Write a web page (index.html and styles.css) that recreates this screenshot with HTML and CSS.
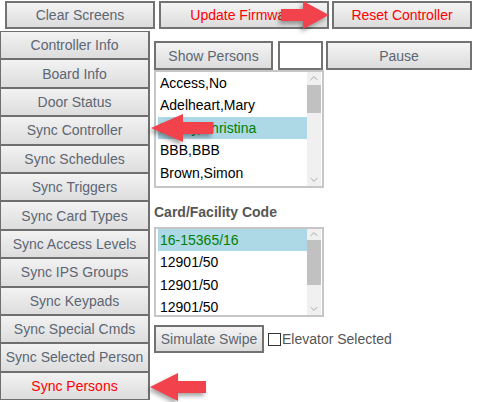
FILE: index.html
```html
<!DOCTYPE html>
<html>
<head>
<meta charset="utf-8">
<link rel="stylesheet" href="styles.css">
</head>
<body>
<div class="page">
  <div class="topbar">
    <button class="btn w-clear">Clear Screens</button>
    <button class="btn red w-update">Update Firmware</button>
    <button class="btn red w-reset">Reset Controller</button>
  </div>
  <div class="main">
    <div class="sidebar">
      <button class="side">Controller Info</button>
      <button class="side">Board Info</button>
      <button class="side">Door Status</button>
      <button class="side">Sync Controller</button>
      <button class="side">Sync Schedules</button>
      <button class="side">Sync Triggers</button>
      <button class="side">Sync Card Types</button>
      <button class="side">Sync Access Levels</button>
      <button class="side">Sync IPS Groups</button>
      <button class="side">Sync Keypads</button>
      <button class="side">Sync Special Cmds</button>
      <button class="side">Sync Selected Person</button>
      <button class="side red">Sync Persons</button>
    </div>
    <div class="panel">
      <div class="row">
        <button class="btn w-show">Show Persons</button>
        <div class="box"></div>
        <button class="btn w-pause">Pause</button>
      </div>
      <div class="list list1">
        <div class="items">
          <div class="item">Access,No</div>
          <div class="item">Adelheart,Mary</div>
          <div class="item sel">Bailey,Christina</div>
          <div class="item">BBB,BBB</div>
          <div class="item">Brown,Simon</div>
        </div>
        <div class="sbar">
          <svg class="chev" width="15" height="13" viewBox="0 0 15 13"><polyline points="4,8 7.5,4.5 11,8" fill="none" stroke="#a3a3a3" stroke-width="1"/></svg>
          <div class="thumb thumb1"></div>
          <div class="spacer"></div>
          <svg class="chev" width="15" height="13" viewBox="0 0 15 13"><polyline points="4,5 7.5,8.5 11,5" fill="none" stroke="#a3a3a3" stroke-width="1"/></svg>
        </div>
      </div>
      <div class="label">Card/Facility Code</div>
      <div class="list list2">
        <div class="items">
          <div class="item sel">16-15365/16</div>
          <div class="item">12901/50</div>
          <div class="item">12901/50</div>
          <div class="item">12901/50</div>
        </div>
        <div class="sbar">
          <svg class="chev" width="15" height="11" viewBox="0 0 15 11"><polyline points="4,7 7.5,3.5 11,7" fill="none" stroke="#a3a3a3" stroke-width="1"/></svg>
          <div class="thumb thumb2"></div>
          <div class="spacer"></div>
          <svg class="chev" width="15" height="13" viewBox="0 0 15 13"><polyline points="4,5 7.5,8.5 11,5" fill="none" stroke="#a3a3a3" stroke-width="1"/></svg>
        </div>
      </div>
      <div class="swipe-row">
        <button class="btn w-swipe">Simulate Swipe</button>
        <label class="chk"><span class="cbox"></span>Elevator Selected</label>
      </div>
    </div>
  </div>

  <svg class="arrow arrow-top" width="64" height="40" viewBox="0 0 64 40">
    <polygon points="4,10 26,10 26,2 52,16 26,30 26,22 4,22" fill="#f2424b"/>
  </svg>
  <svg class="arrow arrow-mid" width="72" height="40" viewBox="0 0 72 40">
    <polygon points="66,10 36,10 36,2 4,16 36,30 36,22 66,22" fill="#f2424b"/>
  </svg>
  <svg class="arrow arrow-bot" width="68" height="40" viewBox="0 0 68 40">
    <polygon points="60,10 32,10 32,2 4,16 32,30 32,22 60,22" fill="#f2424b"/>
  </svg>
</div>
</body>
</html>
```
FILE: styles.css
```css
* { box-sizing: border-box; }
html, body {
  margin: 0;
  padding: 0;
  background: #ffffff;
}
body {
  font-family: "Liberation Sans", Arial, sans-serif;
  font-size: 14px;
  width: 478px;
  height: 402px;
  overflow: hidden;
}
.page {
  position: relative;
  width: 478px;
  height: 402px;
}
button {
  font-family: "Liberation Sans", Arial, sans-serif;
  font-size: 14px;
  margin: 0;
  padding: 0;
  cursor: default;
}
.btn {
  height: 28px;
  border: 2px solid #727272;
  background: linear-gradient(#f4f4f4, #dcdcdc);
  color: #5d6673;
  text-align: center;
}
.red { color: #ff0000 !important; }

.topbar {
  display: flex;
  padding: 1px 0 0 5px;
}
.w-clear { width: 150px; margin-right: 4px; }
.w-update { width: 170px; margin-right: 3px; }
.w-reset { width: 140px; }

.main {
  display: flex;
  margin-top: 2px;
}
.sidebar {
  width: 150px;
  display: flex;
  flex-direction: column;
}
.side {
  height: 28.4px;
  border: 1px solid #6f6f6f;
  border-right-width: 2px;
  background: linear-gradient(#f2f2f2, #dddddd);
  color: #5d6673;
  text-align: center;
  white-space: nowrap;
}

.panel {
  margin-left: 4px;
  margin-top: 10px;
  width: 318px;
}
.row {
  display: flex;
  align-items: stretch;
}
.w-show { width: 119px; height: 29px; margin-right: 5px; }
.box {
  width: 45px;
  height: 29px;
  border: 2px solid #727272;
  background: #fff;
  margin-right: 3px;
}
.w-pause { width: 146px; height: 29px; }

.list {
  width: 170px;
  border: 2px solid #c6c6c6;
  display: flex;
  overflow: hidden;
  background: #fff;
}
.list1 { height: 118px; }
.list2 { height: 90px; margin-top: 7px; }
.items {
  flex: 1;
  padding-left: 2px;
  overflow: hidden;
}
.item {
  height: 22.4px;
  line-height: 22.4px;
  padding-left: 2px;
  color: #000;
  white-space: nowrap;
}
.item.sel {
  background: #add8e6;
  color: #008000;
}
.sbar {
  width: 14px;
  background: #f0f0f0;
  display: flex;
  flex-direction: column;
  margin-right: 1px;
}
.chev { display: block; width: 14px; flex: none; }
.thumb { background: #c1c1c1; flex: none; }
.thumb1 { height: 28px; }
.thumb2 { height: 45px; }
.spacer { flex: 1; }

.label {
  margin-top: 16px;
  font-weight: bold;
  color: #565656;
  line-height: 16px;
}

.swipe-row {
  display: flex;
  align-items: center;
  margin-top: 8px;
}
.w-swipe {
  width: 110px;
  height: 28px;
  margin-right: 4px;
}
.chk {
  display: flex;
  align-items: center;
  color: #555;
}
.cbox {
  width: 13px;
  height: 13px;
  border: 1px solid #333;
  background: #fff;
  margin-right: 1px;
}

.arrow {
  position: absolute;
  filter: drop-shadow(-2px 3px 2px rgba(0,0,0,0.35));
}
.arrow-top { left: 277px; top: -1px; }
.arrow-mid { left: 147px; top: 112px; }
.arrow-bot { left: 146px; top: 371px; }
```
